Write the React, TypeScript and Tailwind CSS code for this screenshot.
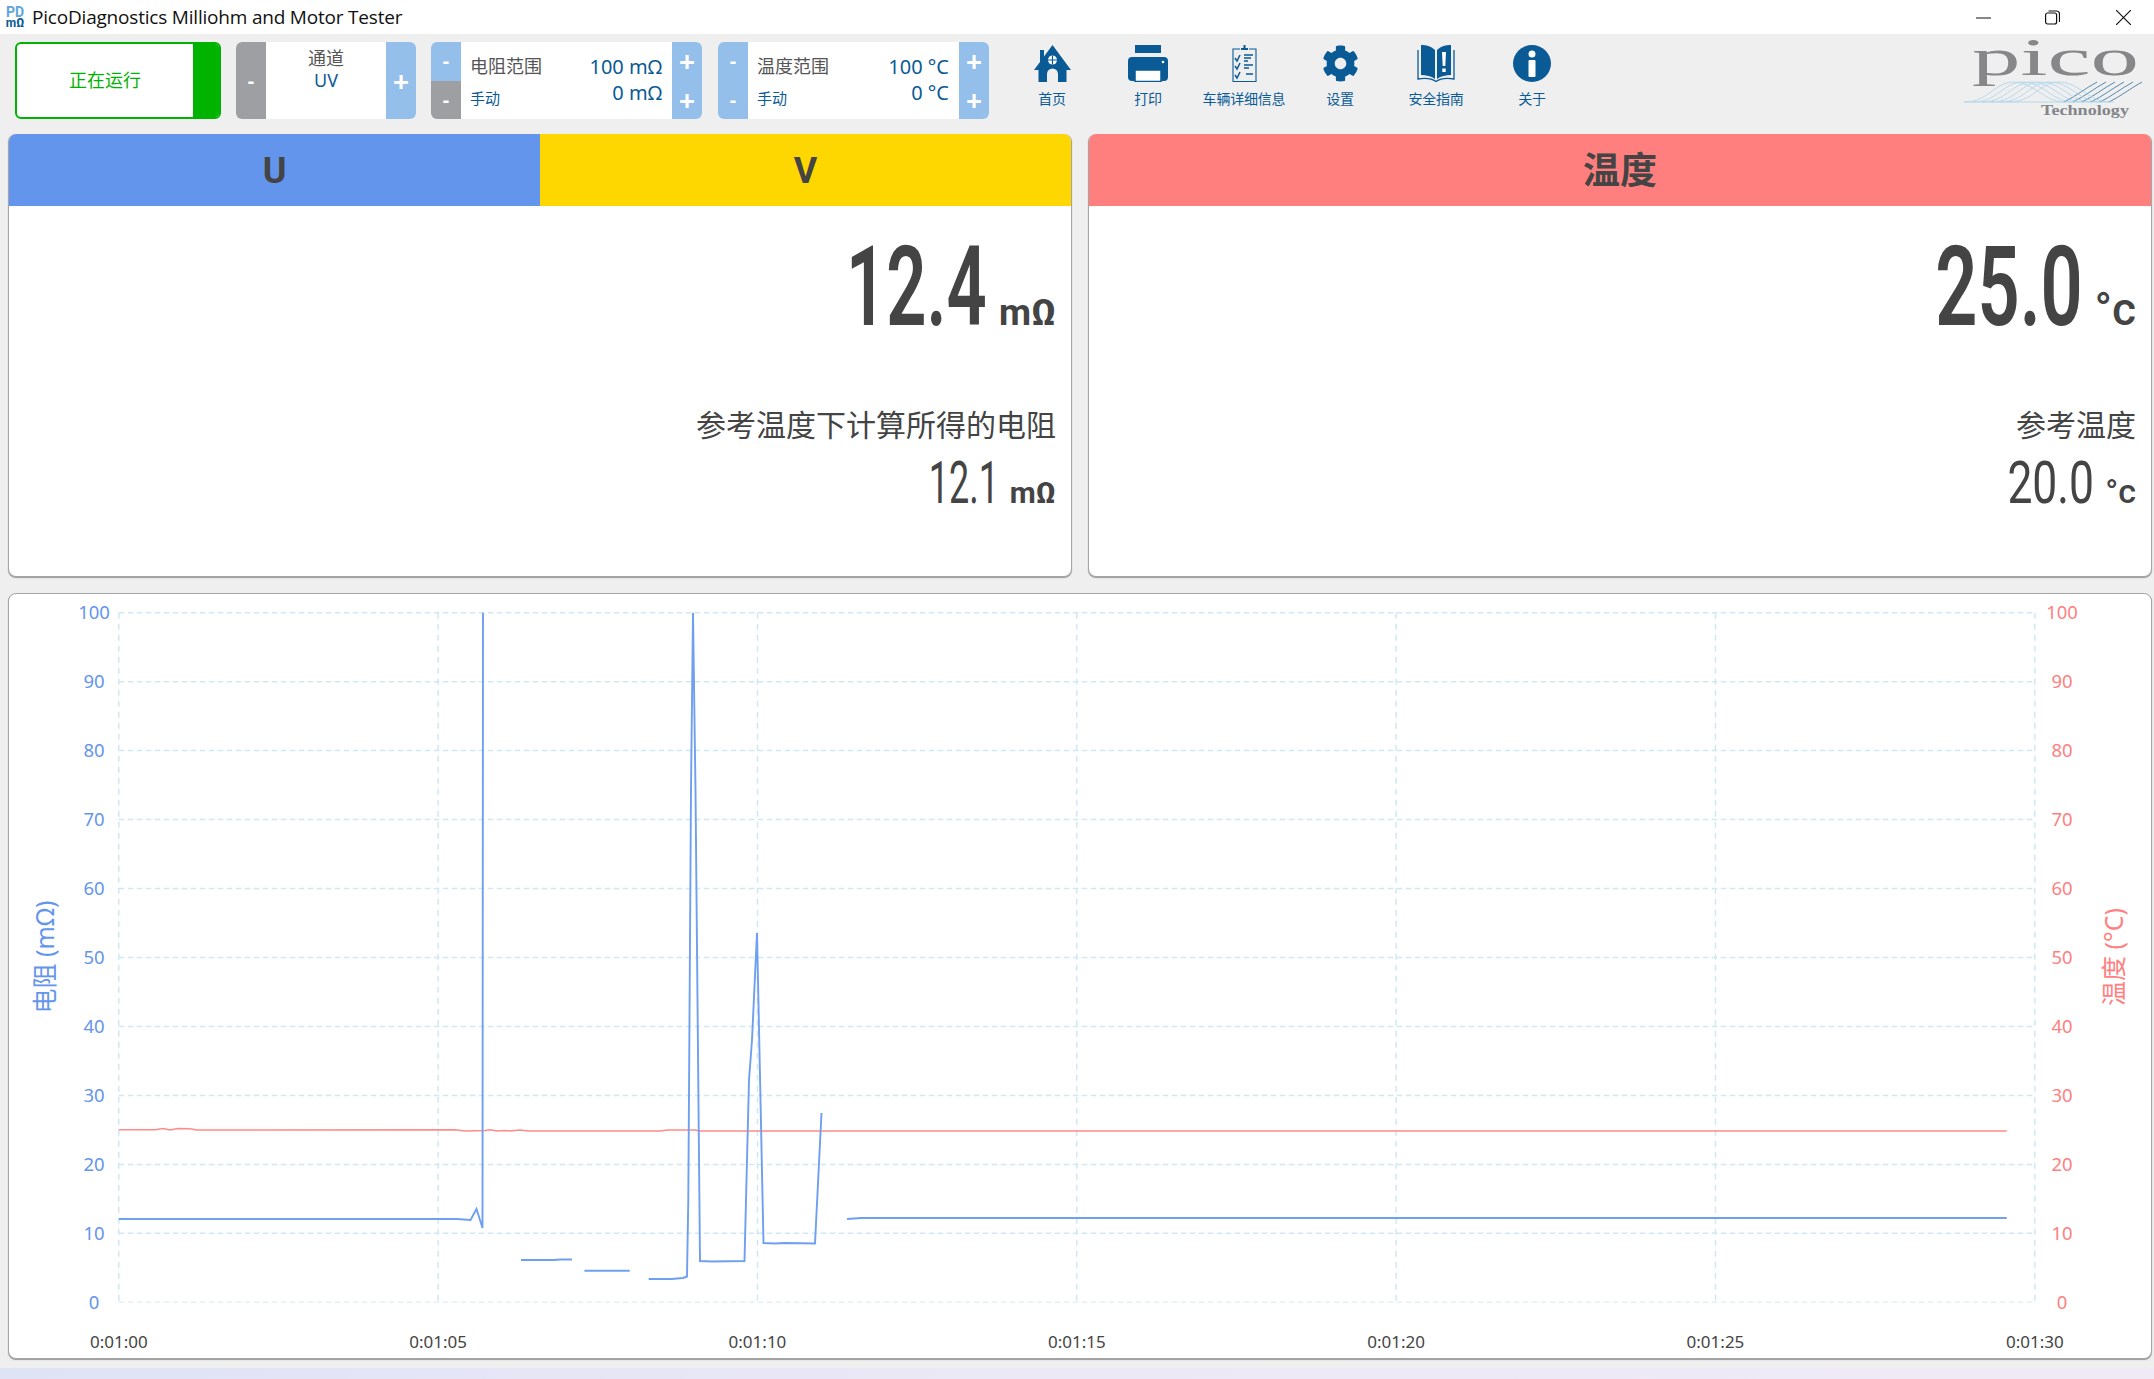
import React from "react"
import { FaCog } from "react-icons/fa"

const CJK = "font-['Noto_Sans','Noto_Sans_CJK_SC',sans-serif]"
const BLUE = "#0a5a96"

function StepBtn({ sign, gray, big, className = "" }: { sign: string; gray?: boolean; big?: boolean; className?: string }) {
    return (
        <div className={`flex min-h-0 w-[30px] flex-1 basis-0 items-center justify-center font-bold leading-none text-white ${big ? "text-[28px]" : "text-[20px]"} ${gray ? "bg-[#9d9fa3]" : "bg-[#94bfeb]"} ${className}`}>
            {sign}
        </div>
    )
}

function RangeBox({ title, top, bottom, lowerGray }: { title: string; top: string; bottom: string; lowerGray?: boolean }) {
    return (
        <div className="flex h-[77px] w-[271px] overflow-hidden rounded-md bg-white">
            <div className="flex flex-col">
                <StepBtn sign="-" />
                <StepBtn sign="-" gray={lowerGray} />
            </div>
            <div className="flex flex-1 justify-between pl-[9px] pr-[10px]">
                <div className="flex flex-col">
                    <span className="mt-[11px] text-[18px] leading-[26px] text-[#555]">{title}</span>
                    <span className="mt-[8px] text-[15px] leading-[22px] text-[#0a5a96]">手动</span>
                </div>
                <div className="flex flex-col items-end text-[20px] leading-[26px] text-[#0a5a96]">
                    <span className="mt-[12px]">{top}</span>
                    <span>{bottom}</span>
                </div>
            </div>
            <div className="flex flex-col">
                <StepBtn sign="+" big />
                <StepBtn sign="+" big />
            </div>
        </div>
    )
}

function HomeIcon() {
    return (
        <svg viewBox="0 0 37 37" className="h-[37px] w-[37px]">
            <path fill={BLUE} d="M18.5 0 37 25h-4.5v12H24V29a5.5 5.5 0 0 0-11 0v8H4.500V25H0l6-8V5h4v6.500Z" />
            <circle cx="18.500" cy="15" r="4.500" fill="#fff" />
            <path stroke={BLUE} strokeWidth="1.200" d="M18.500 10.500v9M14 15h9" />
        </svg>
    )
}

function PrintIcon() {
    return (
        <svg viewBox="0 0 40 37" className="h-[37px] w-[40px]">
            <rect x="7" width="26" height="8" fill={BLUE} />
            <rect y="12" width="40" height="24" rx="4" fill={BLUE} />
            <rect x="7" y="25" width="26" height="11.500" fill="#fff" stroke={BLUE} strokeWidth="1.500" />
            <circle cx="35" cy="17" r="1.300" fill="#fff" />
        </svg>
    )
}

function ClipboardIcon() {
    return (
        <svg viewBox="0 0 25 37" className="h-[37px] w-[25px]" fill="none" stroke={BLUE}>
            <path strokeWidth="1.100" d="M8 4H1v32.500h23V4h-7" />
            <path strokeWidth="2" d="M9 4h7M12.500 0v4" />
            <path strokeWidth="1.500" d="M3 13l2 3 3-6M3 21l2 3 3-6M3 30l2 3 3-6" />
            <path strokeWidth="1.500" d="M12 10h9M12 13h7M12 16h4M12 20h9M12 23h5M14 29h7" />
        </svg>
    )
}

function BookIcon() {
    return (
        <svg viewBox="0 0 40 37" className="h-[37px] w-[40px]">
            <path fill={BLUE} d="M19 5C15 1 10 0 5 0v30c5 0 10 1 14 4ZM21 5c4-4 9-5 14-5v30c-5 0-10 1-14 4Z" />
            <path fill="none" stroke={BLUE} strokeWidth="1.300" d="M2 5v29c6-1 13-1 18 2.500C25 33 32 33 38 34V5" />
            <path fill="#fff" d="M26 7h4l-.7 14h-2.600ZM26.300 23.500h3.400V27h-3.400Z" />
        </svg>
    )
}

function InfoIcon() {
    return (
        <svg viewBox="0 0 38 37" className="h-[37px] w-[38px]">
            <ellipse cx="19" cy="18.500" rx="19" ry="18.500" fill={BLUE} />
            <circle cx="19" cy="9" r="3.500" fill="#fff" />
            <rect x="15.500" y="15" width="7" height="17" rx="1" fill="#fff" />
        </svg>
    )
}

function ToolBtn({ icon, label }: { icon: React.ReactNode; label: string }) {
    return (
        <div className="flex w-[96px] flex-col items-center">
            <div className="mt-[3px] flex h-[37px] items-center justify-center">{icon}</div>
            <span className="mt-[7px] whitespace-nowrap text-[14px] leading-[20px] tracking-[-0.2px] text-[#0a5a96]">{label}</span>
        </div>
    )
}

function PicoLogo() {
    const offsets = [0, 9, 18, 27, 36, 45]
    return (
        <svg viewBox="0 -12 180 92" className="h-[92px] w-[180px]">
            <text x="8" y="35" fontFamily="'Liberation Serif', serif" fontSize="52" fill="#87878a" textLength="167" lengthAdjust="spacingAndGlyphs">pico</text>
            <text x="77" y="75" fontFamily="'Liberation Serif', serif" fontSize="15" fontWeight="700" fill="#85858a" textLength="88" lengthAdjust="spacingAndGlyphs">Technology</text>
            {offsets.map((d) => (
                <g key={d} fill="none" strokeWidth="0.800">
                    <path stroke="#a9d2ea" d={`M${d} 62C${25 + d} 62 ${30 + d} 42 ${50 + d} 42C${70 + d} 42 ${80 + d} 62 ${100 + d} 62`} />
                    <path stroke="#2f6f9f" d={`M${100 + d} 62C${112 + d} 56 ${122 + d} 48 ${133 + d} 42`} />
                </g>
            ))}
            <path stroke="#a9d2ea" strokeWidth="0.800" d="M0 62H150" />
        </svg>
    )
}

const x5 = (1916 / 6)
const plotX = (i: number) => 118.8 + i * x5
const plotY = (v: number) => 1302.3 - v * 6.896

const blueSegs = [
    "118.8,1219 457,1219 470.5,1220 476.5,1209 482.5,1228 483,612.7",
    "521,1260 554,1260 560,1259.5 572,1259.5",
    "584.4,1270.7 629.7,1270.7",
    "648.7,1279 671.6,1279 683,1278 687,1276.5 688.3,1200 691,790 693,612.7 695.5,790 700,1261 712,1261.5 744.5,1261 749,1080 752,1040 757,933 763.5,1243 775,1243.5 785,1243 815,1243.5 821.5,1113",
    "847,1219 861,1218 2006.7,1218",
]
const redLine = "118.8,1129.7 155,1129.7 163,1128.5 170,1130 178,1128.5 190,1128.7 197,1130 455,1129.7 465,1131 485,1130.5 490,1129.7 497,1131 505,1130.5 510,1131 520,1130 528,1131 660,1131 668,1130 695,1130 700,1131 2006.7,1131"
const timeLabels = ["0:01:00", "0:01:05", "0:01:10", "0:01:15", "0:01:20", "0:01:25", "0:01:30"]
const ticks = [0, 10, 20, 30, 40, 50, 60, 70, 80, 90, 100]

function Chart() {
    return (
        <svg viewBox="9 594 2142 764" className="block h-[764px] w-[2142px]" fontFamily="'Noto Sans', 'Noto Sans CJK SC', sans-serif">
            {ticks.map((t) => (
                <line key={t} x1="118.8" x2="2034.700" y1={plotY(t)} y2={plotY(t)} stroke={t === 0 ? "#e3f2f7" : "#cfe9f3"} strokeWidth="1.500" strokeDasharray="5.500 3.500" />
            ))}
            {timeLabels.map((_, i) => (
                <line key={i} x1={plotX(i)} x2={plotX(i)} y1="612.700" y2="1302.300" stroke="#cfe9f3" strokeWidth="1.500" strokeDasharray="6 5" />
            ))}
            <polyline points={redLine} fill="none" stroke="#ff8a8a" strokeWidth="1.500" />
            {blueSegs.map((p, i) => (
                <polyline key={i} points={p} fill="none" stroke="#6f9ff0" strokeWidth="1.900" />
            ))}
            {ticks.map((t) => (
                <g key={t} fontSize="18.500" textAnchor="middle">
                    <text x="94" y={plotY(t) + 6.500} fill="#6495ed">{t}</text>
                    <text x="2062" y={plotY(t) + 6.500} fill="#ff8080">{t}</text>
                </g>
            ))}
            {timeLabels.map((l, i) => (
                <text key={l} x={plotX(i)} y="1348" fontSize="17" textAnchor="middle" fill="#444">{l}</text>
            ))}
            <text transform="translate(54 957) rotate(-90)" fontSize="25" textAnchor="middle" fill="#6495ed">电阻 (mΩ)</text>
            <text transform="translate(2123 957) rotate(-90)" fontSize="25" textAnchor="middle" fill="#ff8080">温度 (°C)</text>
        </svg>
    )
}

function Reading({ value, unit, subTitle, subValue, subUnit, degree, valueScale, subScale }: { value: string; unit: string; subTitle: string; subValue: string; subUnit: string; degree?: boolean; valueScale: string; subScale: string }) {
    return (
        <div className="flex flex-1 flex-col items-end pr-[15px] text-[#444]">
            <div className="mt-[26px] flex items-baseline leading-none">
                <span className={`origin-right text-[111px] font-semibold ${valueScale}`}>{value}</span>
                <span className={`ml-[12px] ${degree ? "text-[46px] font-medium" : "text-[37px] font-bold"}`}>{unit}</span>
            </div>
            <div className={`mt-[62px] text-[30px] leading-[40px] ${CJK}`}>{subTitle}</div>
            <div className="mt-[8px] flex items-baseline leading-none">
                <span className={`origin-right text-[60px] ${subScale}`}>{subValue}</span>
                <span className={`ml-[11px] ${degree ? "text-[34px] font-medium" : "text-[30px] font-bold"}`}>{subUnit}</span>
            </div>
        </div>
    )
}

export default function App() {
    return (
        <div className={`flex h-[1379px] w-[2154px] flex-col overflow-hidden bg-[#efefef] ${CJK}`}>
            {/* title bar */}
            <div className="flex h-[34px] items-center bg-white">
                <div className="ml-[5px] flex w-[20px] flex-col items-center font-['Roboto',sans-serif] font-bold leading-none">
                    <span className="text-[14px] leading-[12px] text-[#5da5dc]">PD</span>
                    <span className="text-[12px] leading-[11px] text-[#0a5a96]">mΩ</span>
                </div>
                <span className="ml-[7px] text-[19px] text-[#111] font-['Open_Sans',sans-serif] tracking-[-0.2px]">PicoDiagnostics Milliohm and Motor Tester</span>
                <div className="ml-auto flex items-center">
                    <svg viewBox="0 0 15 15" className="h-[15px] w-[15px]" stroke="#111" fill="none"><path d="M0 8h15" /></svg>
                    <svg viewBox="0 0 15 15" className="ml-[54px] h-[15px] w-[15px]" stroke="#111" fill="none" strokeWidth="1.200">
                        <rect x="0.600" y="3" width="11" height="11" rx="2" />
                        <path d="M3.500 1h8a3 3 0 0 1 3 3v8" />
                    </svg>
                    <svg viewBox="0 0 15 15" className="ml-[56px] mr-[23px] h-[15px] w-[15px]" stroke="#111" fill="none" strokeWidth="1.200"><path d="M0 0l15 15M15 0 0 15" /></svg>
                </div>
            </div>

            {/* toolbar */}
            <div className="flex h-[100px] items-start pl-[15px] pt-[8px]">
                <div className="flex h-[77px] w-[206px] overflow-hidden rounded-md border-2 border-[#00b300] bg-white">
                    <div className="flex flex-1 items-center justify-center text-[18px] text-[#00b300]">正在运行</div>
                    <div className="w-[26px] bg-[#00b300]" />
                </div>
                <div className="ml-[15px] flex h-[77px] w-[180px] overflow-hidden rounded-md bg-white">
                    <StepBtn sign="-" gray className="!flex-none" />
                    <div className="flex flex-1 flex-col items-center pt-[4px] text-[18px] leading-[24px]">
                        <span className="text-[#555]">通道</span>
                        <span className="-mt-[2px] text-[#0a5a96]">UV</span>
                    </div>
                    <StepBtn sign="+" big className="!flex-none" />
                </div>
                <div className="ml-[15px]">
                    <RangeBox title="电阻范围" top="100 mΩ" bottom="0 mΩ" lowerGray />
                </div>
                <div className="ml-[16px]">
                    <RangeBox title="温度范围" top="100 °C" bottom="0 °C" />
                </div>
                <div className="ml-[15px] flex">
                    <ToolBtn icon={<HomeIcon />} label="首页" />
                    <ToolBtn icon={<PrintIcon />} label="打印" />
                    <ToolBtn icon={<ClipboardIcon />} label="车辆详细信息" />
                    <ToolBtn icon={<FaCog size={37} color={BLUE} />} label="设置" />
                    <ToolBtn icon={<BookIcon />} label="安全指南" />
                    <ToolBtn icon={<InfoIcon />} label="关于" />
                </div>
                <div className="ml-auto -mt-[14px] mr-[10px]">
                    <PicoLogo />
                </div>
            </div>

            {/* readings */}
            <div className="flex h-[443px] gap-[16px] pl-[8px] pr-[2px] font-['Roboto','Noto_Sans_CJK_SC',sans-serif]">
                <div className="flex flex-1 flex-col overflow-hidden rounded-lg border border-[#a5a5a5] border-t-0 bg-white shadow-[0_1px_1px_#999]">
                    <div className="flex h-[72px] shrink-0 text-[36px] font-bold leading-[75px] text-[#444]">
                        <div className="flex-1 bg-[#6495ed] text-center">U</div>
                        <div className="flex-1 bg-[#ffd700] text-center">V</div>
                    </div>
                    <Reading value="12.4" unit="mΩ" subTitle="参考温度下计算所得的电阻" subValue="12.1" subUnit="mΩ" valueScale="scale-x-[0.635]" subScale="scale-x-[0.6]" />
                </div>
                <div className="flex flex-1 flex-col overflow-hidden rounded-lg border border-[#a5a5a5] border-t-0 bg-white shadow-[0_1px_1px_#999]">
                    <div className="h-[72px] shrink-0 bg-[#ff7f7f] text-center text-[37px] font-bold leading-[75px] text-[#444]">温度</div>
                    <Reading value="25.0" unit="°c" subTitle="参考温度" subValue="20.0" subUnit="°c" degree valueScale="scale-x-[0.665]" subScale="scale-x-[0.74]" />
                </div>
            </div>

            {/* trend chart */}
            <div className="mx-[8px] mr-[2px] mt-[16px] h-[766px] overflow-hidden rounded-lg border border-[#a5a5a5] bg-white shadow-[0_1px_1px_#999]">
                <Chart />
            </div>

            {/* whatever is behind the window */}
            <div className="mt-[9px] flex-1 bg-gradient-to-r from-[#dfe3f6] via-[#ece8f7] to-[#f0eaf6]" />
        </div>
    )
}
